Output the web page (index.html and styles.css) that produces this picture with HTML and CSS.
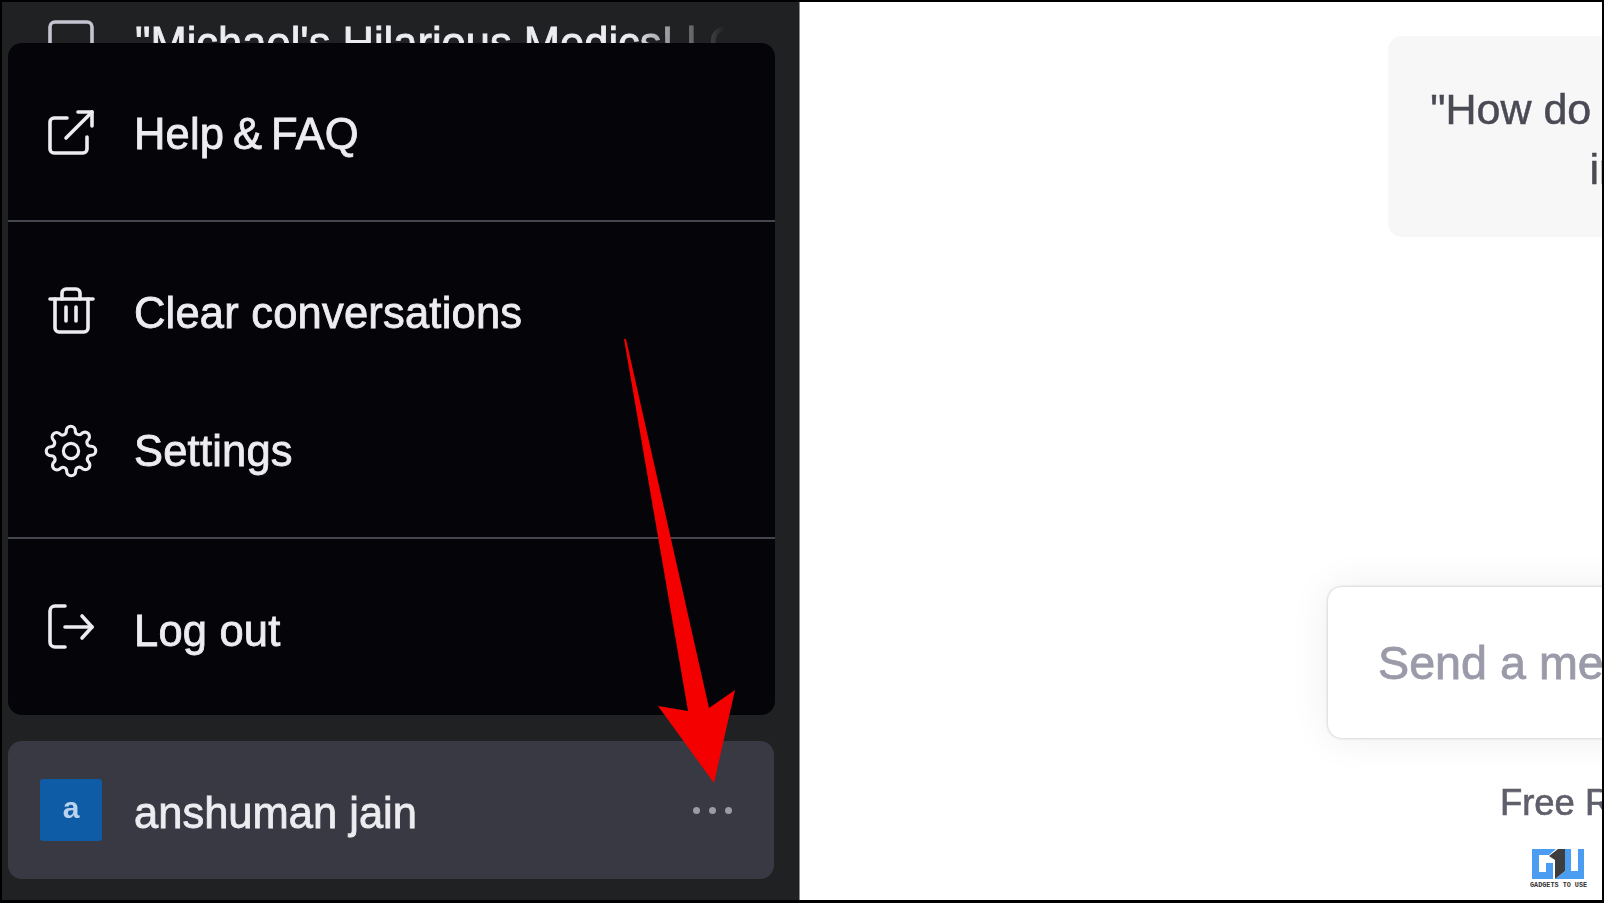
FILE: index.html
```html
<!DOCTYPE html>
<html lang="en">
<head>
    <meta charset="UTF-8">
    <title>ChatGPT</title>
    <link rel="stylesheet" href="styles.css">
</head>
<body>

<div class="app">
    <aside class="sidebar">
        <div class="chat-row">
            <svg class="icon" viewBox="0 0 58 58"><path d="M8 52V13a5 5 0 0 1 5-5h32a5 5 0 0 1 5 5v24a5 5 0 0 1-5 5H18z"/></svg>
            <span class="chat-title">"Michael's Hilarious Medics! | Comedy"</span>
        </div>

        <div class="user-row">
            <div class="avatar">a</div>
            <span class="user-name">anshuman jain</span>
            <div class="dots"><i></i><i></i><i></i></div>
        </div>

        <nav class="menu">
            <a class="menu-item item-help">
                <svg class="icon" viewBox="0 0 58 58"><path d="M45 32v12a4 4 0 0 1-4 4H12a4 4 0 0 1-4-4V17a4 4 0 0 1 4-4h13"/><path d="M36 7h14v14"/><path d="M24 33 50 7"/></svg>
                <span>Help &amp; FAQ</span>
            </a>
            <div class="divider"></div>
            <a class="menu-item item-clear">
                <svg class="icon" viewBox="0 0 58 58"><path d="M8 15h43"/><path d="M46 15v29a4 4 0 0 1-4 4H17a4 4 0 0 1-4-4V15"/><path d="M20 15V9a4 4 0 0 1 4-4h10a4 4 0 0 1 4 4v6"/><path d="M24 23v14"/><path d="M34 23v14"/></svg>
                <span>Clear conversations</span>
            </a>
            <a class="menu-item item-settings">
                <svg class="icon icon-gear" viewBox="0 0 24 24"><circle cx="12" cy="12" r="3.4"/><path d="M19.4 15a1.65 1.65 0 0 0 .33 1.82l.06.06a2 2 0 1 1-2.83 2.83l-.06-.06a1.65 1.65 0 0 0-2.82 1.17V21a2 2 0 1 1-4 0v-.09a1.65 1.65 0 0 0-2.82-1.17l-.06.06a2 2 0 1 1-2.83-2.83l.06-.06a1.65 1.65 0 0 0-1.17-2.82H3a2 2 0 1 1 0-4h.09a1.65 1.65 0 0 0 1.17-2.82l-.06-.06a2 2 0 1 1 2.83-2.83l.06.06a1.65 1.65 0 0 0 2.82-1.17V3a2 2 0 1 1 4 0v.09a1.65 1.65 0 0 0 2.82 1.17l.06-.06a2 2 0 1 1 2.83 2.83l-.06.06a1.65 1.65 0 0 0 1.17 2.82H21a2 2 0 1 1 0 4h-.09a1.65 1.65 0 0 0-1.51 1z"/></svg>
                <span>Settings</span>
            </a>
            <div class="divider"></div>
            <a class="menu-item item-logout">
                <svg class="icon" viewBox="0 0 58 58"><path d="M23 7H13a5 5 0 0 0-5 5v31a5 5 0 0 0 5 5h10"/><path d="M40 17l10 11-10 11"/><path d="M23 28h27"/></svg>
                <span>Log out</span>
            </a>
        </nav>
    </aside>

    <main class="main">
        <div class="example-card">"How do I make an HTTP request<br>in Javascript?"<span class="card-arrow">→</span></div>
        <div class="composer">Send a message...</div>
        <p class="footnote">Free Research Preview.</p>
    </main>
</div>

<!-- annotation drawn on top of the screenshot -->
<svg class="arrow" viewBox="0 0 1604 903"><polygon points="624,339 626,339 709,708 735,690 714,783 658,706 688,711"/></svg>

<div class="watermark">
    <svg viewBox="0 0 52 30"><path class="wm-blue" d="M0 0H24L17 6H7V23H14V14H21V30H0Z"/><path class="wm-blue" d="M33 0H39V22H46V0H52V30H23L33 22Z"/><path class="wm-dark" d="M17 7 26 0H33V22L23 30V11Z"/></svg>
    <span>GADGETS TO USE</span>
</div>

</body>
</html>
```

FILE: styles.css
```css
* {
    margin: 0;
    padding: 0;
    box-sizing: border-box;
}

body {
    width: 1604px;
    height: 903px;
    overflow: hidden;
    background-color: #000;
    padding: 2px 2px 3px 2px;
    font-family: 'Liberation Sans', Arial, sans-serif;
}

/* the reference is an upscaled capture, everything in it is a little soft */
.app {
    display: flex;
    height: 898px;
    overflow: hidden;
    filter: blur(0.6px);
}

.sidebar {
    position: relative;
    width: 798px;
    flex-shrink: 0;
    display: flex;
    flex-direction: column;
    justify-content: space-between;
    padding: 12px 25px 21px 6px;
    background-color: #202123;
    border-right: 1px solid #8a8a8a;
    color: #ececf1;
}

.icon {
    width: 58px;
    height: 58px;
    flex-shrink: 0;
    fill: none;
    stroke: currentColor;
    stroke-width: 3.6;
    stroke-linecap: round;
    stroke-linejoin: round;
}

.icon-gear {
    stroke-width: 1.4;
}

.chat-row {
    display: flex;
    align-items: center;
    gap: 35px;
    padding-left: 34px;
    font-size: 43.5px;
    -webkit-text-stroke: 0.8px;
}

.chat-row .icon {
    color: #c5c5d2;
}

.chat-title {
    width: 590px;
    white-space: nowrap;
    overflow: hidden;
    -webkit-mask-image: linear-gradient(to right, #000 84%, transparent 100%);
    mask-image: linear-gradient(to right, #000 84%, transparent 100%);
}

.user-row {
    display: flex;
    align-items: center;
    height: 138px;
    padding: 0 42px 0 32px;
    background-color: #393943;
    border-radius: 14px;
}

.avatar {
    width: 62px;
    height: 62px;
    display: flex;
    align-items: center;
    justify-content: center;
    padding-bottom: 4px;
    background-color: #0e5ba6;
    border-radius: 3px;
    color: #b9d3ee;
    font-size: 30px;
    font-weight: 700;
}

.user-name {
    flex: 1;
    margin-left: 32px;
    padding-top: 6px;
    font-size: 43.5px;
    -webkit-text-stroke: 0.8px;
}

.dots {
    display: flex;
    gap: 9px;
}

.dots i {
    width: 7px;
    height: 7px;
    border-radius: 50%;
    background-color: #9a9aa8;
}

.menu {
    position: absolute;
    top: 41px;
    left: 6px;
    width: 767px;
    height: 672px;
    background-color: #050509;
    border-radius: 14px;
}

.menu-item {
    display: flex;
    align-items: center;
    gap: 34px;
    padding-left: 34px;
    color: #ececf1;
    font-size: 43.5px;
    letter-spacing: 0.2px;
    -webkit-text-stroke: 0.8px;
}

.item-help {
    height: 177px;
    padding-top: 5px;
    word-spacing: -3.5px;
}

.item-clear {
    height: 160px;
    padding-top: 22px;
}

.item-settings {
    height: 155px;
    padding-bottom: 17px;
}

.item-settings .icon {
    width: 54px;
    height: 54px;
    margin: 0 2px;
}

.item-logout {
    height: 176px;
    padding-top: 8px;
}

.item-logout .icon {
    margin-top: -6px;
}

.divider {
    height: 2px;
    background-color: #45454f;
}

.main {
    flex: 1;
    position: relative;
    background-color: #fff;
    overflow: hidden;
}

.example-card {
    margin: 34px 0 0 588px;
    width: 725px;
    height: 201px;
    padding: 43px 20px;
    background-color: #f7f7f8;
    border-radius: 14px;
    color: #4a4a55;
    font-size: 43px;
    line-height: 60px;
    text-align: center;
    white-space: nowrap;
    -webkit-text-stroke: 0.5px;
}

.card-arrow {
    font-size: 44px;
}

.composer {
    margin: 350px 0 0 528px;
    width: 900px;
    height: 151px;
    padding: 49px 50px;
    background-color: #fff;
    border-radius: 14px;
    box-shadow: 0 0 3px rgba(0, 0, 0, 0.25), 0 0 40px rgba(0, 0, 0, 0.07);
    color: #9a9aa9;
    font-size: 46.7px;
    -webkit-text-stroke: 0.8px;
    white-space: nowrap;
}

.footnote {
    margin: 44px 0 0 700px;
    color: #5f5f6b;
    font-size: 36.4px;
    -webkit-text-stroke: 0.7px;
    white-space: nowrap;
}

.arrow {
    position: absolute;
    top: 0;
    left: 0;
    width: 1604px;
    height: 903px;
    fill: #f40000;
}

.watermark {
    position: absolute;
    top: 849px;
    left: 1530px;
    width: 57px;
}

.watermark svg {
    display: block;
    width: 52px;
    height: 30px;
    margin: 0 0 2px 2px;
}

.wm-blue {
    fill: #4a9df0;
}

.wm-dark {
    fill: #3d3d3d;
}

.watermark span {
    display: block;
    color: #333;
    font-family: 'Liberation Mono', monospace;
    font-size: 6.8px;
    line-height: 8px;
    font-weight: 700;
    white-space: nowrap;
}
```
